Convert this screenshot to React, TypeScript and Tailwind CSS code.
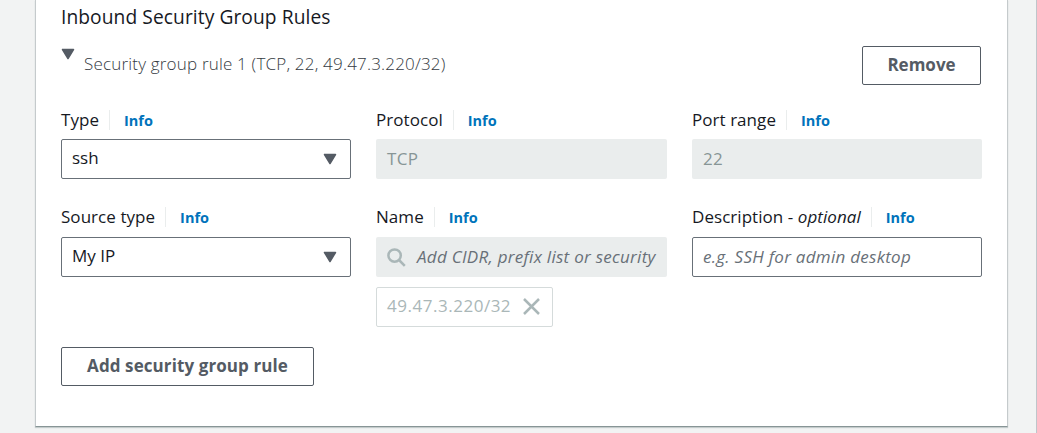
import type { ReactNode } from "react";

function Caret() {
  return (
    <svg width="14" height="12" viewBox="0 0 14 12" className="shrink-0">
      <path d="M1.5 1.5h11L7 10.5z" fill="#545b64" stroke="#545b64" strokeWidth="1.5" strokeLinejoin="round" />
    </svg>
  );
}

function Field({ label, children }: { label: ReactNode; children: ReactNode }) {
  return (
    <div className="flex flex-col">
      <div className="flex h-5 items-center">
        <span className="text-[17px] leading-5 tracking-[0.05px] whitespace-nowrap text-[#16191f]">{label}</span>
        <span className="ml-2.5 h-5 w-px shrink-0 bg-[#eaeded]" />
        <a className="ml-3.5 pt-0.5 text-[14.5px] leading-5 font-bold text-[#0073bb]">Info</a>
      </div>
      {children}
    </div>
  );
}

function Select({ value, className }: { value: string; className: string }) {
  return (
    <div className={`flex h-10 items-center justify-between rounded-xs border border-[#687078] pr-[13px] pl-2.5 text-[17px] text-[#16191f] ${className}`}>
      <span className="-mt-0.5">{value}</span>
      <Caret />
    </div>
  );
}

function Disabled({ value }: { value: string }) {
  return (
    <div className="mt-[9px] flex h-10 items-center rounded-xs bg-[#eaeded] px-[11px] text-[17px] tracking-[0.4px] text-[#879596]">{value}</div>
  );
}

export default function App() {
  return (
    <div className="flex h-[433px] w-[1037px] overflow-hidden border-r border-[#bfc5ca] bg-[#f2f3f3] pl-[35px] font-['Open_Sans','Noto_Sans',sans-serif]">
      <main className="h-[427px] w-[973px] border-r border-b border-l border-[#c5cacc] border-b-[#879596] bg-white px-[25px] shadow-[0_1px_1px_#c5cccc]">
        <h2 className="pt-1 text-[19.2px] leading-[26px] tracking-[0.08px] text-[#16191f]">Inbound Security Group Rules</h2>
        <div className="mt-4 flex h-[39px] w-[920px] justify-between">
          <div className="flex">
            <div className="pt-0.5"><Caret /></div>
            <span className="ml-[9px] pt-1.5 text-[17px] leading-6 font-light tracking-[0.19px] text-[#343a42]">Security group rule 1 (TCP, 22, 49.47.3.220/32)</span>
          </div>
          <button className="flex h-[39px] w-[119px] items-center justify-center rounded-xs border border-[#545b64] pb-0.5 text-[17px] font-bold text-[#545b64]">
            Remove
          </button>
        </div>
        <div className="mt-[25px] grid w-[921px] grid-cols-[290px_291px_290px] gap-x-[25px] gap-y-7">
          <Field label="Type"><Select value="ssh" className="mt-[9px]" /></Field>
          <Field label="Protocol"><Disabled value="TCP" /></Field>
          <Field label="Port range"><Disabled value="22" /></Field>
          <Field label="Source type"><Select value="My IP" className="mt-2.5" /></Field>
          <Field label="Name">
            <div className="mt-2.5 flex h-10 items-center rounded-xs bg-[#eaeded] pl-[11px] text-[17px] text-[#687078] italic">
              <svg width="19" height="19" viewBox="0 0 19 19" fill="none" stroke="#aab7b8" strokeWidth="2.5">
                <circle cx="7.6" cy="7.6" r="6.2" />
                <path d="M12 12l5.8 5.8" />
              </svg>
              <span className="ml-[11px] tracking-[0.28px] whitespace-nowrap">Add CIDR, prefix list or security</span>
            </div>
            <div className="mt-2.5 flex h-10 w-[177px] items-center justify-between rounded-xs border border-[#d5dbdb] pr-3 pb-0.5 pl-2.5 text-[17px] text-[#aab7b8]">
              <span className="font-medium tracking-[0.52px]">49.47.3.220/32</span>
              <svg width="17" height="17" viewBox="0 0 17 17" stroke="#aab7b8" strokeWidth="2.5">
                <path d="M1 1l15 15M16 1L1 16" />
              </svg>
            </div>
          </Field>
          <Field label={<>Description - <em>optional</em></>}>
            <div className="mt-2.5 flex h-10 items-center rounded-xs border border-[#687078] px-2.5 text-[17px] tracking-[0.27px] text-[#687078] italic">
              e.g. SSH for admin desktop
            </div>
          </Field>
        </div>
        <button className="mt-5 flex h-[39px] w-[253px] items-center justify-center rounded-xs border border-[#545b64] pb-px text-[17px] font-bold tracking-[0.09px] text-[#545b64]">
          Add security group rule
        </button>
      </main>
    </div>
  );
}
